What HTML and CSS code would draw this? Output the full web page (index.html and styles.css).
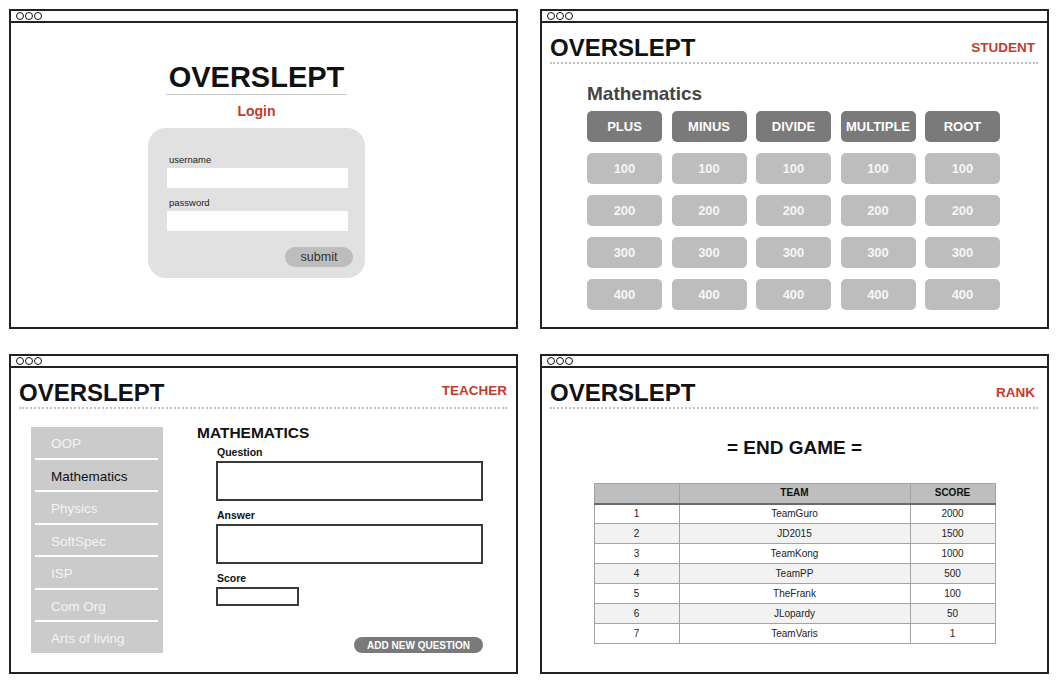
FILE: index.html
```html
<!DOCTYPE html>
<html lang="en">
<head>
    <meta charset="UTF-8">
    <meta name="viewport" content="width=device-width, initial-scale=1.0">
    <title>OVERSLEPT wireframes</title>
    <link rel="stylesheet" href="styles.css">
</head>
<body>
    <div class="board">

        <!-- login -->
        <section class="window">
            <div class="titlebar"><span class="dot"></span><span class="dot"></span><span class="dot"></span></div>
            <div class="login-screen">
                <h1 class="login-title">OVERSLEPT</h1>
                <div class="login-label">Login</div>
                <form class="login-box">
                    <label class="field-label">username</label>
                    <div class="field-input"></div>
                    <label class="field-label">password</label>
                    <div class="field-input"></div>
                    <div class="submit-row">
                        <button type="button" class="submit-btn">submit</button>
                    </div>
                </form>
            </div>
        </section>

        <!-- student -->
        <section class="window">
            <div class="titlebar"><span class="dot"></span><span class="dot"></span><span class="dot"></span></div>
            <header class="app-header">
                <h1 class="brand">OVERSLEPT</h1>
                <span class="role">STUDENT</span>
            </header>
            <div class="student-screen">
                <h2 class="subject-title">Mathematics</h2>
                <div class="board-grid">
                    <div class="cat">PLUS</div>
                    <div class="cat">MINUS</div>
                    <div class="cat">DIVIDE</div>
                    <div class="cat">MULTIPLE</div>
                    <div class="cat">ROOT</div>
                    <div class="cell">100</div><div class="cell">100</div><div class="cell">100</div><div class="cell">100</div><div class="cell">100</div>
                    <div class="cell">200</div><div class="cell">200</div><div class="cell">200</div><div class="cell">200</div><div class="cell">200</div>
                    <div class="cell">300</div><div class="cell">300</div><div class="cell">300</div><div class="cell">300</div><div class="cell">300</div>
                    <div class="cell">400</div><div class="cell">400</div><div class="cell">400</div><div class="cell">400</div><div class="cell">400</div>
                </div>
            </div>
        </section>

        <!-- teacher -->
        <section class="window">
            <div class="titlebar"><span class="dot"></span><span class="dot"></span><span class="dot"></span></div>
            <header class="app-header">
                <h1 class="brand">OVERSLEPT</h1>
                <span class="role role-teacher">TEACHER</span>
            </header>
            <div class="teacher-screen">
                <ul class="subject-list">
                    <li>OOP</li>
                    <li class="active">Mathematics</li>
                    <li>Physics</li>
                    <li>SoftSpec</li>
                    <li>ISP</li>
                    <li>Com Org</li>
                    <li>Arts of living</li>
                </ul>
                <div class="question-form">
                    <h2 class="form-title">MATHEMATICS</h2>
                    <div class="form-label first">Question</div>
                    <div class="form-box tall"></div>
                    <div class="form-label">Answer</div>
                    <div class="form-box tall"></div>
                    <div class="form-label">Score</div>
                    <div class="form-box short"></div>
                    <div class="add-row">
                        <button type="button" class="add-btn">ADD NEW QUESTION</button>
                    </div>
                </div>
            </div>
        </section>

        <!-- rank -->
        <section class="window">
            <div class="titlebar"><span class="dot"></span><span class="dot"></span><span class="dot"></span></div>
            <header class="app-header">
                <h1 class="brand">OVERSLEPT</h1>
                <span class="role">RANK</span>
            </header>
            <div class="rank-screen">
                <h2 class="end-title">= END GAME =</h2>
                <table class="rank-table">
                    <colgroup>
                        <col class="c-pos">
                        <col class="c-team">
                        <col class="c-score">
                    </colgroup>
                    <thead>
                        <tr><th></th><th>TEAM</th><th>SCORE</th></tr>
                    </thead>
                    <tbody>
                        <tr><td>1</td><td>TeamGuro</td><td>2000</td></tr>
                        <tr><td>2</td><td>JD2015</td><td>1500</td></tr>
                        <tr><td>3</td><td>TeamKong</td><td>1000</td></tr>
                        <tr><td>4</td><td>TeamPP</td><td>500</td></tr>
                        <tr><td>5</td><td>TheFrank</td><td>100</td></tr>
                        <tr><td>6</td><td>JLopardy</td><td>50</td></tr>
                        <tr><td>7</td><td>TeamVaris</td><td>1</td></tr>
                    </tbody>
                </table>
            </div>
        </section>

    </div>
</body>
</html>
```

FILE: styles.css
```css
* {
    margin: 0;
    padding: 0;
    box-sizing: border-box;
}

body {
    font-family: "Liberation Sans", Arial, Helvetica, sans-serif;
    background-color: #fff;
    color: #111;
    padding: 9px 0 0 9px;
}

.board {
    display: grid;
    grid-template-columns: 509px 509px;
    grid-template-rows: 320px 320px;
    column-gap: 22px;
    row-gap: 25px;
}

/* window frame */
.window {
    border: 2px solid #222;
    display: flex;
    flex-direction: column;
    background-color: #fff;
}

.titlebar {
    height: 12px;
    flex: 0 0 auto;
    border-bottom: 2px solid #222;
    display: flex;
    align-items: center;
    padding-left: 5px;
}

.dot {
    width: 8px;
    height: 8px;
    border: 1.5px solid #111;
    border-radius: 50%;
    margin-right: 1px;
}

/* shared header */
.app-header {
    display: flex;
    justify-content: space-between;
    align-items: center;
    margin: 0 9px 0 8px;
    padding-top: 11px;
    border-bottom: 2px dotted #c2c2c2;
}

.brand {
    font-size: 24px;
    line-height: 28px;
    font-weight: bold;
    color: #111;
}

.role {
    font-size: 13.5px;
    line-height: 15px;
    font-weight: bold;
    color: #c23b2e;
    padding-right: 3px;
    margin-top: -2px;
}

.role-teacher {
    padding-right: 0;
    margin-top: -6px;
}

/* login */
.login-screen {
    display: flex;
    flex-direction: column;
    align-items: center;
    padding: 37px 14px 0 0;
}

.login-title {
    font-size: 29px;
    line-height: 34px;
    font-weight: bold;
    padding: 0 3px;
    border-bottom: 1px solid #c8c8c8;
}

.login-label {
    margin-top: 8px;
    font-size: 14px;
    line-height: 16px;
    font-weight: bold;
    color: #c23b2e;
}

.login-box {
    margin-top: 9px;
    width: 217px;
    height: 150px;
    background-color: #e1e1e1;
    border-radius: 18px;
    padding: 26px 17px 0 19px;
    display: flex;
    flex-direction: column;
}

.field-label {
    font-size: 9.5px;
    line-height: 12px;
    color: #222;
    padding-left: 2px;
}

.field-input {
    height: 20px;
    margin: 2px 0 9px;
    background-color: #fff;
}

.submit-row {
    display: flex;
    justify-content: flex-end;
    margin: 7px -5px 0 0;
}

.submit-btn {
    width: 68px;
    height: 20px;
    border: none;
    border-radius: 10px;
    background-color: #bdbdbd;
    color: #333;
    font-family: inherit;
    font-size: 12.5px;
}

/* student board */
.student-screen {
    padding: 19px 0 0 45px;
}

.subject-title {
    font-size: 19px;
    line-height: 22px;
    font-weight: bold;
    color: #444;
}

.board-grid {
    margin-top: 6px;
    display: grid;
    grid-template-columns: repeat(5, 75px);
    grid-template-rows: 31px repeat(4, 31px);
    column-gap: 9.5px;
    row-gap: 11px;
}

.cat,
.cell {
    display: flex;
    align-items: center;
    justify-content: center;
    border-radius: 5px;
    color: #fff;
    font-size: 13px;
    font-weight: bold;
}

.cat {
    background-color: #7a7a7a;
}

.cell {
    background-color: #bdbdbd;
    color: #f6f6f6;
}

/* teacher */
.teacher-screen {
    display: flex;
    align-items: flex-start;
    padding: 18px 0 0 20px;
}

.subject-list {
    list-style: none;
    width: 132px;
    background-color: #cbcbcb;
    padding: 0 5px 0 4px;
}

.subject-list li {
    padding: 9px 0 5px 16px;
    line-height: 16.5px;
    font-size: 13.5px;
    color: #f4f4f4;
    border-bottom: 2px solid #fff;
}

.subject-list li:last-child {
    border-bottom: none;
}

.subject-list li.active {
    color: #111;
}

.question-form {
    margin: -3px 0 0 34px;
    width: 287px;
    display: flex;
    flex-direction: column;
}

.form-title {
    font-size: 15.5px;
    line-height: 18px;
    font-weight: bold;
    color: #111;
}

.form-label {
    margin: 8px 0 3px 20px;
    font-size: 10.5px;
    line-height: 12px;
    font-weight: bold;
    color: #111;
}

.form-label.first {
    margin-top: 4px;
}

.form-box {
    margin-left: 19px;
    border: 2px solid #3a3a3a;
    background-color: #fff;
}

.form-box.tall {
    width: 267px;
    height: 40px;
}

.form-box.short {
    width: 83px;
    height: 19px;
}

.add-row {
    display: flex;
    justify-content: flex-end;
    margin-top: 31px;
    padding-right: 1px;
}

.add-btn {
    width: 129px;
    height: 16px;
    border: none;
    border-radius: 8px;
    background-color: #7a7a7a;
    color: #fff;
    font-family: inherit;
    font-size: 10px;
    font-weight: bold;
}

/* rank */
.rank-screen {
    display: flex;
    flex-direction: column;
    align-items: center;
    padding-top: 28px;
}

.end-title {
    font-size: 19px;
    line-height: 22px;
    font-weight: bold;
    color: #111;
}

.rank-table {
    margin-top: 24px;
    width: 401px;
    border-collapse: collapse;
    table-layout: fixed;
    font-size: 10px;
    color: #222;
    text-align: center;
}

.c-pos { width: 85px; }
.c-team { width: 231px; }
.c-score { width: 85px; }

.rank-table th,
.rank-table td {
    border: 1px solid #a3a3a3;
    height: 20px;
    padding: 0;
    line-height: 12px;
}

.rank-table th {
    background-color: #bebebe;
    color: #111;
    font-weight: bold;
    border-bottom: 2px solid #6a6a6a;
}

.rank-table tbody tr:nth-child(even) td {
    background-color: #f2f2f2;
}
```
